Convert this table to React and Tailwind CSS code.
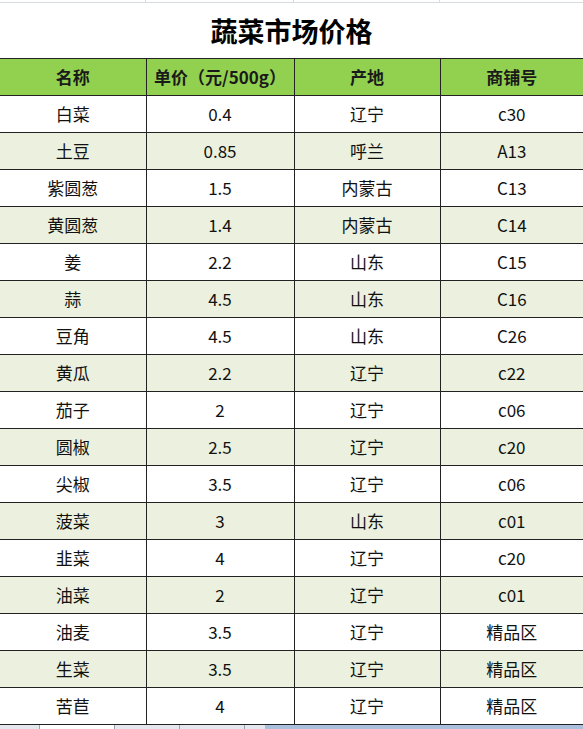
import React from "react";

const rows = [
  ["白菜", "0.4", "辽宁", "c30"],
  ["土豆", "0.85", "呼兰", "A13"],
  ["紫圆葱", "1.5", "内蒙古", "C13"],
  ["黄圆葱", "1.4", "内蒙古", "C14"],
  ["姜", "2.2", "山东", "C15"],
  ["蒜", "4.5", "山东", "C16"],
  ["豆角", "4.5", "山东", "C26"],
  ["黄瓜", "2.2", "辽宁", "c22"],
  ["茄子", "2", "辽宁", "c06"],
  ["圆椒", "2.5", "辽宁", "c20"],
  ["尖椒", "3.5", "辽宁", "c06"],
  ["菠菜", "3", "山东", "c01"],
  ["韭菜", "4", "辽宁", "c20"],
  ["油菜", "2", "辽宁", "c01"],
  ["油麦", "3.5", "辽宁", "精品区"],
  ["生菜", "3.5", "辽宁", "精品区"],
  ["苦苣", "4", "辽宁", "精品区"],
];

const headers = ["名称", "单价（元/500g）", "产地", "商铺号"];

export default function App() {
  return (
    <div
      className="w-[583px] h-[729px] bg-white overflow-hidden flex flex-col"
      style={{ fontFamily: '"Noto Sans CJK SC", "Noto Sans", sans-serif' }}
    >
      {/* faint sheet grid at the top */}
      <div className="h-[3px] flex border-b border-[#d6dbe2]">
        <div className="w-[146px] border-r border-[#d6dbe2]" />
        <div className="w-[148px] border-r border-[#d6dbe2]" />
        <div className="w-[146px] border-r border-[#d6dbe2]" />
        <div className="flex-1" />
      </div>

      <h1 className="h-[55px] flex items-center justify-center text-[27px] font-bold text-black leading-none">
        蔬菜市场价格
      </h1>

      <table className="w-[583px] border-collapse table-fixed">
        <colgroup>
          <col className="w-[146px]" />
          <col className="w-[148px]" />
          <col className="w-[146px]" />
          <col className="w-[143px]" />
        </colgroup>
        <thead>
          <tr className="h-[37px] bg-[#92d050]">
            {headers.map((h, i) => (
              <th
                key={h}
                className={`border-y border-[#222] ${i < 3 ? "border-r" : ""} text-[17px] font-bold text-[#1a1a1a] text-center p-0 whitespace-nowrap`}
              >
                {h}
              </th>
            ))}
          </tr>
        </thead>
        <tbody>
          {rows.map((r, idx) => (
            <tr key={idx} className={`h-[37px] ${idx % 2 === 1 ? "bg-[#ebf1de]" : "bg-white"}`}>
              {r.map((c, i) => (
                <td
                  key={i}
                  className={`border-b border-[#222] ${i < 3 ? "border-r" : ""} text-[17px] text-[#111] text-center p-0 whitespace-nowrap`}
                >
                  {c}
                </td>
              ))}
            </tr>
          ))}
        </tbody>
      </table>

      {/* sheet tab bar */}
      <div className="flex-1 flex bg-[#a9bfdb]">
        <div className="w-[265px] flex bg-[#e4e8ee]">
          <div className="w-[40px] border-r border-[#9aa3ae]" />
          <div className="w-[75px] bg-white border-r border-[#9aa3ae]" />
          <div className="w-[65px] border-r border-[#9aa3ae]" />
          <div className="w-[65px] border-r border-[#9aa3ae]" />
        </div>
      </div>
    </div>
  );
}
